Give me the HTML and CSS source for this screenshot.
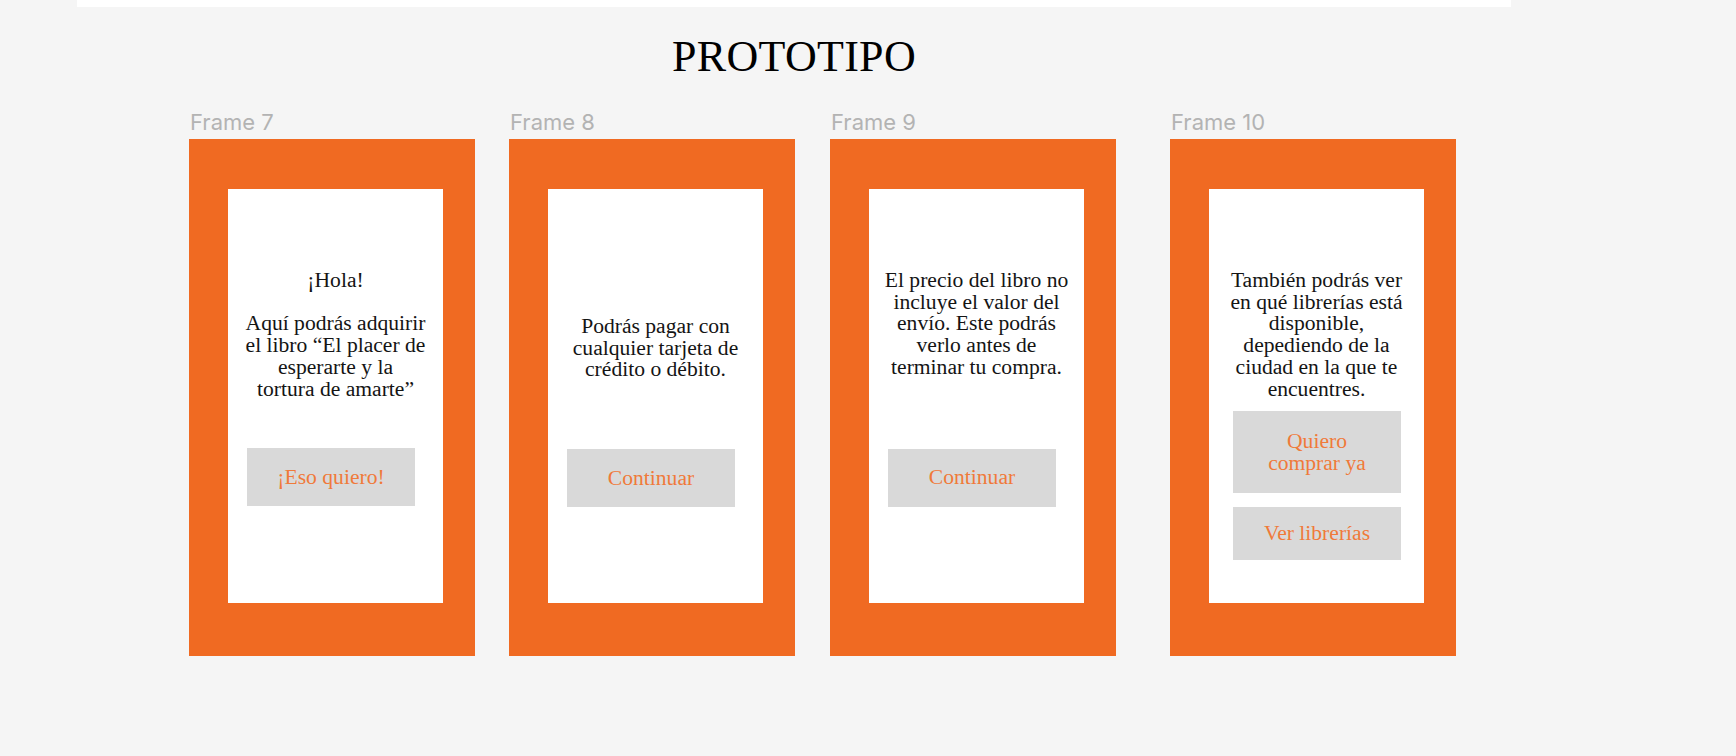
FILE: index.html
```html
<!DOCTYPE html>
<html lang="es">
<head>
<meta charset="utf-8">
<title>Prototipo</title>
<link rel="stylesheet" href="styles.css">
</head>
<body>
<div class="topbar"></div>
<h1 class="title">PROTOTIPO</h1>
<div class="frames">
  <section class="frame">
    <div class="label">Frame 7</div>
    <div class="phone">
      <div class="screen">
        <p class="msg">¡Hola!<br><br>Aquí podrás adquirir<br>el libro “El placer de<br>esperarte y la<br>tortura de amarte”</p>
        <div class="btn btn--single btn--hola">¡Eso quiero!</div>
      </div>
    </div>
  </section>
  <section class="frame">
    <div class="label">Frame 8</div>
    <div class="phone">
      <div class="screen">
        <p class="msg msg--low">Podrás pagar con<br>cualquier tarjeta de<br>crédito o débito.</p>
        <div class="btn btn--single btn--pay">Continuar</div>
      </div>
    </div>
  </section>
  <section class="frame frame--third">
    <div class="label">Frame 9</div>
    <div class="phone">
      <div class="screen">
        <p class="msg">El precio del libro no<br>incluye el valor del<br>envío. Este podrás<br>verlo antes de<br>terminar tu compra.</p>
        <div class="btn btn--single btn--ship">Continuar</div>
      </div>
    </div>
  </section>
  <section class="frame frame--last">
    <div class="label">Frame 10</div>
    <div class="phone">
      <div class="screen">
        <p class="msg">También podrás ver<br>en qué librerías está<br>disponible,<br>depediendo de la<br>ciudad en la que te<br>encuentres.</p>
        <div class="btn btn--buy">Quiero<br>comprar ya</div>
        <div class="btn btn--shops">Ver librerías</div>
      </div>
    </div>
  </section>
</div>
</body>
</html>
```

FILE: styles.css
```css
* { box-sizing: border-box; }

html, body {
  margin: 0;
  padding: 0;
  background: #f5f5f5;
}

body {
  width: 1736px;
  height: 756px;
  overflow: hidden;
  font-family: "Liberation Serif", "Times New Roman", serif;
}

.topbar {
  margin-left: 77px;
  width: 1434px;
  height: 7px;
  background: #ffffff;
}

.title {
  margin: 24px 0 0 77px;
  width: 1434px;
  text-align: center;
  font-family: "Liberation Serif", serif;
  font-weight: normal;
  font-size: 44px;
  line-height: 51px;
  letter-spacing: 0.3px;
  color: #000;
}

.frames {
  display: flex;
  gap: 34px;
  margin-top: 27px;
  padding-left: 189px;
}

.frame--third { margin-left: 1px; }
.frame--last { margin-left: 20px; }

.label {
  font-family: Inter, "Liberation Sans", sans-serif;
  font-size: 22px;
  line-height: 26px;
  height: 26px;
  margin: 0 0 4px 1px;
  color: #b3b3b3;
}

.phone {
  width: 286px;
  height: 517px;
  background: #f06a22;
  padding: 50px 0 0 39px;
}

.screen {
  width: 215px;
  height: 414px;
  background: #ffffff;
  display: flex;
  flex-direction: column;
  padding-top: 81px;
}

.msg {
  margin: 0;
  text-align: center;
  font-size: 21.6px;
  line-height: 21.7px;
  color: #141414;
}

.msg--low { margin-top: 46px; }

.btn {
  display: flex;
  align-items: center;
  justify-content: center;
  text-align: center;
  width: 168px;
  background: #d9d9d9;
  color: #f07a3a;
  font-size: 21.6px;
  line-height: 22.5px;
}

.btn--single {
  height: 58px;
  margin-left: 19px;
}

.btn--hola { margin-top: 48px; }
.btn--pay { margin-top: 68px; }
.btn--ship { margin-top: 70px; }

.btn--buy {
  height: 82px;
  margin: 11px 0 0 24px;
}

.btn--shops {
  height: 53px;
  margin: 14px 0 0 24px;
}
```
